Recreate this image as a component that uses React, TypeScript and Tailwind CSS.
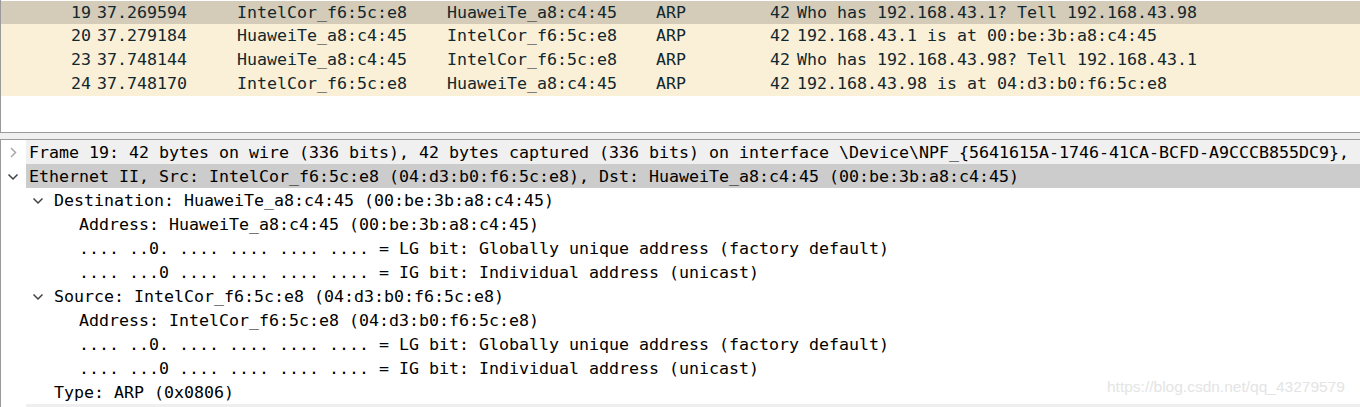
const MONO = { fontFamily: '"DejaVu Sans Mono", "Liberation Mono", monospace' };

type Packet = { no: number; time: string; src: string; dst: string; proto: string; len: number; info: string };

const PACKETS: Packet[] = [
  { no: 19, time: '37.269594', src: 'IntelCor_f6:5c:e8', dst: 'HuaweiTe_a8:c4:45', proto: 'ARP', len: 42, info: 'Who has 192.168.43.1? Tell 192.168.43.98' },
  { no: 20, time: '37.279184', src: 'HuaweiTe_a8:c4:45', dst: 'IntelCor_f6:5c:e8', proto: 'ARP', len: 42, info: '192.168.43.1 is at 00:be:3b:a8:c4:45' },
  { no: 23, time: '37.748144', src: 'HuaweiTe_a8:c4:45', dst: 'IntelCor_f6:5c:e8', proto: 'ARP', len: 42, info: 'Who has 192.168.43.98? Tell 192.168.43.1' },
  { no: 24, time: '37.748170', src: 'IntelCor_f6:5c:e8', dst: 'HuaweiTe_a8:c4:45', proto: 'ARP', len: 42, info: '192.168.43.98 is at 04:d3:b0:f6:5c:e8' },
];

type Node = { level: number; text: string; arrow?: 'open' | 'closed'; bg?: string };

const TREE: Node[] = [
  { level: 0, arrow: 'closed', bg: 'bg-[#f0f0f0]', text: 'Frame 19: 42 bytes on wire (336 bits), 42 bytes captured (336 bits) on interface \\Device\\NPF_{5641615A-1746-41CA-BCFD-A9CCCB855DC9},' },
  { level: 0, arrow: 'open', bg: 'bg-[#cccccc]', text: 'Ethernet II, Src: IntelCor_f6:5c:e8 (04:d3:b0:f6:5c:e8), Dst: HuaweiTe_a8:c4:45 (00:be:3b:a8:c4:45)' },
  { level: 1, arrow: 'open', text: 'Destination: HuaweiTe_a8:c4:45 (00:be:3b:a8:c4:45)' },
  { level: 2, text: 'Address: HuaweiTe_a8:c4:45 (00:be:3b:a8:c4:45)' },
  { level: 2, text: '.... ..0. .... .... .... .... = LG bit: Globally unique address (factory default)' },
  { level: 2, text: '.... ...0 .... .... .... .... = IG bit: Individual address (unicast)' },
  { level: 1, arrow: 'open', text: 'Source: IntelCor_f6:5c:e8 (04:d3:b0:f6:5c:e8)' },
  { level: 2, text: 'Address: IntelCor_f6:5c:e8 (04:d3:b0:f6:5c:e8)' },
  { level: 2, text: '.... ..0. .... .... .... .... = LG bit: Globally unique address (factory default)' },
  { level: 2, text: '.... ...0 .... .... .... .... = IG bit: Individual address (unicast)' },
  { level: 1, text: 'Type: ARP (0x0806)' },
];

function Chevron({ open }: { open: boolean }) {
  return (
    <svg width="25" height="24" viewBox="0 0 25 24" className="shrink-0">
      {open ? (
        <polyline points="7.5,10.5 12,15 16.5,10.5" fill="none" stroke="#404040" strokeWidth="1.5" />
      ) : (
        <polyline points="10,8 14.5,12.5 10,17" fill="none" stroke="#a8a8a8" strokeWidth="1.5" />
      )}
    </svg>
  );
}

export default function App() {
  return (
    <div className="relative h-[407px] w-[1360px] overflow-hidden bg-white text-[16.61px] leading-6" style={MONO}>
      {/* Packet list */}
      <div className="h-[133px] border-b border-l border-[#9a9a9a] pt-px">
        {PACKETS.map((p, i) => (
          <div key={p.no}
            className={`flex whitespace-pre text-[#12272e] ${i === 0 ? 'h-[23px] bg-[#d4ccb9] leading-[23px]' : 'h-6 bg-[#faf0d7]'}`}>
            <div className="w-[92px] pr-[2px] text-right">{p.no}</div>
            <div className="w-[140px] pl-[4px]">{p.time}</div>
            <div className="w-[210px] pl-[4px]">{p.src}</div>
            <div className="w-[209px] pl-[4px]">{p.dst}</div>
            <div className="w-[81px] pl-[4px]">{p.proto}</div>
            <div className="w-[60px] pr-[3px] text-right">{p.len}</div>
            <div className="flex-1 pl-[4px]">{p.info}</div>
          </div>
        ))}
      </div>

      {/* Splitter */}
      <div className="h-[6px] bg-[#f0f0f0]" />

      {/* Packet details */}
      <div className="border-l border-t border-[#9a9a9a] text-black">
        {TREE.map((n, i) => (
          <div key={i} className="flex h-6 whitespace-pre">
            <div className="shrink-0" style={{ width: n.level * 25 }} />
            {n.arrow ? <Chevron open={n.arrow === 'open'} /> : <div className="w-[25px] shrink-0" />}
            <div className={`flex-1 pl-[3px] pt-px leading-[23px] ${n.bg ?? ''}`}>{n.text}</div>
          </div>
        ))}
        <div className="flex h-6">
          <div className="w-[25px] shrink-0" />
          <div className="flex-1 bg-[#efefef]" />
        </div>
      </div>

      {/* Watermark */}
      <div className="absolute left-[1107px] top-[379px] text-[15.5px] leading-none text-[#e4e4e4]"
        style={{ fontFamily: '"Liberation Sans", Arial, sans-serif' }}>
        https://blog.csdn.net/qq_43279579
      </div>
    </div>
  );
}
